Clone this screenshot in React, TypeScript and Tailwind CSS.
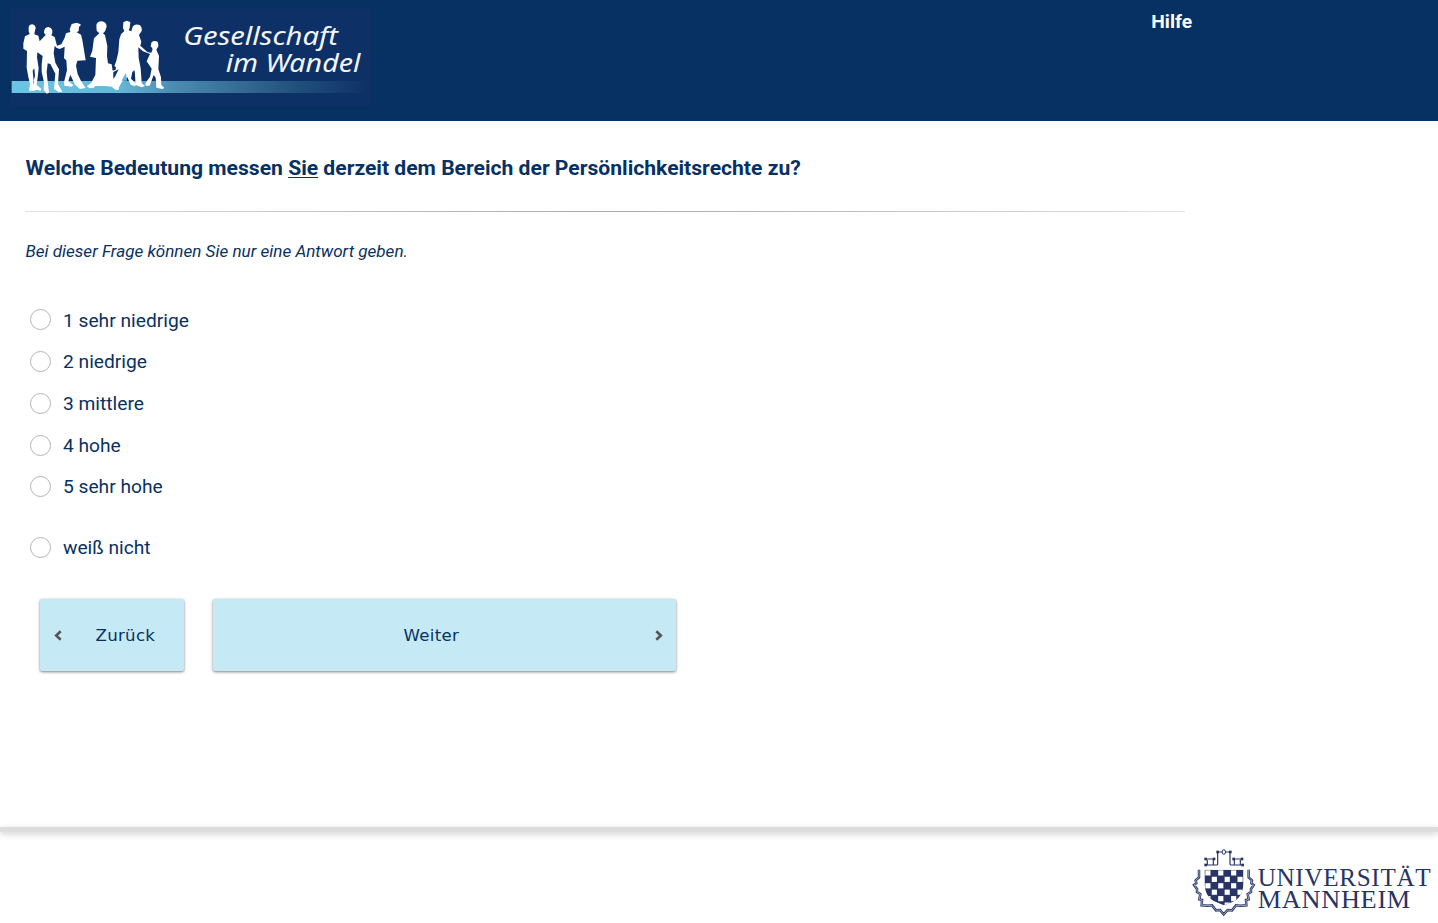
import React from 'react';

const options = ['1 sehr niedrige', '2 niedrige', '3 mittlere', '4 hohe', '5 sehr hohe'];

function StudyLogo() {
  return (
    <svg className="block h-[98px] w-[360px]" viewBox="33 24 1080 294" aria-label="Gesellschaft im Wandel">
      <defs>
        <linearGradient id="band" x1="0" x2="1" y1="0" y2="0">
          <stop offset="0" stopColor="#6bc5e3" />
          <stop offset="0.3" stopColor="#65b8d8" />
          <stop offset="0.45" stopColor="#4c8db3" />
          <stop offset="0.8" stopColor="#21507c" />
          <stop offset="1" stopColor="#0f3166" />
        </linearGradient>
      </defs>
      <rect x="33" y="24" width="1080" height="294" fill="#0d3166" />
      <rect x="35" y="243" width="1065" height="36" fill="url(#band)" />
      <g fill="#fff">
        <path d="M86 81Q88 73 97 73Q106 75 107 84L104 96L103 103L115 107L119 124L131 111L137 105L132 98Q132 82 145 81Q159 84 157 99L154 106L164 111L171 137L184 133L194 113L198 100L211 96L209 88L215 72L230 68L242 73L241 78L237 80L236 93L230 97L243 104L247 120L257 181L232 182L228 197L233 222L243 243L257 264L240 267L225 254L211 224L205 243L220 256L215 260L193 257L192 247L201 210L199 181L192 175L194 140L179 147L169 143L164 137L161 160L166 188L177 208L174 252L187 275L177 277L162 267L166 221L151 192L143 190L140 216L143 245L147 278L140 281L131 269L132 247L125 216L125 192L128 168L112 157L111 172L116 205L113 232L110 255L124 266L122 272L110 269L100 273L87 272L90 251L85 231L80 203L81 153L70 146V130L75 109L89 102L86 94Z" />
        <path d="M289 75Q292 64 304 64Q319 65 320 80L315 94L309 100L315 106L322 138L321 169L324 190L335 193L338 212L347 209L348 201L343 199L349 182L355 157L358 118L363 103L373 93L369 84L370 67L380 62L391 66L389 84L386 91L394 94L398 80Q405 70 419 75Q427 81 425 93L417 105L424 125L421 137L443 157L454 158L458 147L452 138L455 126Q465 119 474 127L475 139L469 149L477 168L475 207L483 232L484 255L493 264L487 267L469 263L467 233L461 225L449 257L437 257L436 250L450 230L455 206L440 184L450 162L429 154L415 142L416 174L422 205L425 249L435 258L425 262L407 255L404 211L397 216L393 236L409 252L405 259L392 254L382 232L366 245L356 263L357 269L347 270L335 260L317 258L286 258L281 263L269 265L260 259L273 250L286 225L288 174L270 170L277 152L282 115L298 100L290 92Z" />
      </g>
      <path d="M98 212L103 205L105 228L101 242Z" fill="#0d3166" />
      <path d="M340 216L356 208L345 230L340 236Z" fill="#0d3166" />
      <path d="M98 242H103L101 255ZM364 242L378 218L381 242Z" fill="#65b8d8" />
      <g fill="#f4f6fa" fontFamily="'Noto Sans', sans-serif" fontStyle="italic">
        <text x="550" y="134" fontSize="74" textLength="464" lengthAdjust="spacingAndGlyphs">Gesellschaft</text>
        <text x="677" y="217" fontSize="74" textLength="404" lengthAdjust="spacingAndGlyphs">im Wandel</text>
      </g>
    </svg>
  );
}

const shieldOutline =
  'M57 149V172L47 181L49 190L42 195L51 207V216L61 222L58 238L66 240L65 256L84 257L96 256L108 271L120 270L131 283L143 270L156 271L168 256L181 257L199 256L198 240L206 238L203 222L213 216V207L221 195L214 190L216 181L206 172V149';

function UniversityLogo() {
  const cells = Array.from({ length: 36 }, (_, i) => ({ row: Math.floor(i / 6), col: i % 6 })).filter(
    ({ row, col }) => (row + col) % 2 === 0,
  );
  return (
    <svg className="block h-[70px] w-[240px]" viewBox="36 84 720 210" aria-label="Universität Mannheim">
      <defs>
        <clipPath id="shield">
          <path d="M74 149H190V183Q191 208 182 224Q173 240 155 247L132 256L110 247Q91 240 82 224Q73 208 74 183Z" />
        </clipPath>
      </defs>
      <g clipPath="url(#shield)">
        <rect x="72" y="147" width="122" height="112" fill="#273465" />
        {cells.map(({ row, col }) => (
          <rect key={`${row}-${col}`} x={76 + col * 19.3} y={151 + row * 19.3} width="15.500" height="15.500" fill="#fff" />
        ))}
      </g>
      <g fill="none" stroke="#273465">
        <path strokeWidth="3.500" d="M76 135H108M155 135H188M82 120V134M100 120V134M163 120V134M181 120V134M79 117H104M159 117H187M113 96V130Q114 135 108 135M150 96V130Q149 135 155 135M113 96H126M137 96H150" />
        <ellipse strokeWidth="3" cx="131.500" cy="96" rx="5" ry="7" />
        <path strokeWidth="7.500" d={shieldOutline} />
        <path stroke="#c4c9da" strokeWidth="2.200" d={shieldOutline} />
      </g>
      <g fill="#273465">
        {[[73, 113], [98, 113], [157, 113], [182, 113], [109, 92], [147, 92], [73, 131], [184, 131]].map(([x, y]) => (
          <rect key={`${x}-${y}`} x={x} y={y} width="8" height="8" />
        ))}
      </g>
      <g fill="#273465" fontFamily="'Liberation Serif', serif" fontSize="74">
        <text x="233" y="198" letterSpacing="2" textLength="521" lengthAdjust="spacingAndGlyphs">UNIVERSITÄT</text>
        <text x="233" y="263" letterSpacing="2" textLength="460" lengthAdjust="spacingAndGlyphs">MANNHEIM</text>
      </g>
    </svg>
  );
}

function Option({ label }: { label: string }) {
  return (
    <label className="flex h-[41.7px] items-center gap-3 text-[19.2px]">
      <input type="radio" name="answer" className="size-[21px] shrink-0 appearance-none rounded-full border border-[#b5b5b5] bg-white" />
      <span className="pt-[2.400px]">{label}</span>
    </label>
  );
}

function Chevron({ back = false }: { back?: boolean }) {
  return (
    <svg className="mt-px h-[11px] w-2" viewBox="0 0 8 11" fill="none" stroke="#555" strokeWidth="2.600">
      <path d={back ? 'M6.700 1.300L2.200 5.500L6.700 9.700' : 'M1.300 1.300L5.800 5.500L1.300 9.700'} />
    </svg>
  );
}

export default function App() {
  return (
    <div className="flex h-[923px] w-full flex-col overflow-hidden bg-white font-['Roboto',sans-serif] text-[#083163]">
      <header className="flex h-[121px] shrink-0 justify-between bg-[#083163] pt-2 pl-[11px]">
        <StudyLogo />
        <a className="mr-[246px] text-[19.2px] leading-[27px] font-bold text-white">Hilfe</a>
      </header>
      <main className="flex h-[706px] shrink-0 flex-col pl-[25px]">
        <h1 className="mt-8 pl-[0.600px] text-[21.120px] leading-[30px] font-bold">
          Welche Bedeutung messen <span className="underline decoration-1 underline-offset-2">Sie</span> derzeit dem Bereich der Persönlichkeitsrechte zu?
        </h1>
        <div className="mt-7 h-px w-[1160px] shrink-0 bg-linear-to-r from-[#e2e2e2] via-[#aaa] to-[#e2e2e2]" />
        <p className="mt-[27px] pl-[0.400px] text-[17.070px] leading-[25px] italic">Bei dieser Frage können Sie nur eine Antwort geben.</p>
        <div className="mt-[35.100px] pl-[5px]">
          {options.map((label) => (
            <Option key={label} label={label} />
          ))}
          <div className="mt-[18.800px]">
            <Option label="weiß nicht" />
          </div>
        </div>
        <div className="mt-[30.600px] ml-[15px] flex gap-[29px] font-['DejaVu_Sans',sans-serif] text-[16.600px] tracking-[0.3px]">
          <button className="flex h-[72px] w-[144px] items-center rounded-[2px] bg-[#c5e9f5] pl-[13.500px] shadow-[0_1px_3px_rgba(0,0,0,0.5)]">
            <Chevron back />
            <span className="ml-[34px] pt-[3px]">Zurück</span>
          </button>
          <button className="flex h-[72px] w-[463px] items-center justify-between rounded-[2px] bg-[#c5e9f5] pr-[13.500px] pl-[190.500px] shadow-[0_1px_3px_rgba(0,0,0,0.5)]">
            <span className="pt-[3px]">Weiter</span>
            <Chevron />
          </button>
        </div>
      </main>
      <footer className="flex grow flex-col">
        <div className="h-[5px] shrink-0 bg-[#dedede] shadow-[0_2px_6px_rgba(0,0,0,0.2)]" />
        <div className="mt-4 mr-[6px] self-end">
          <UniversityLogo />
        </div>
      </footer>
    </div>
  );
}
